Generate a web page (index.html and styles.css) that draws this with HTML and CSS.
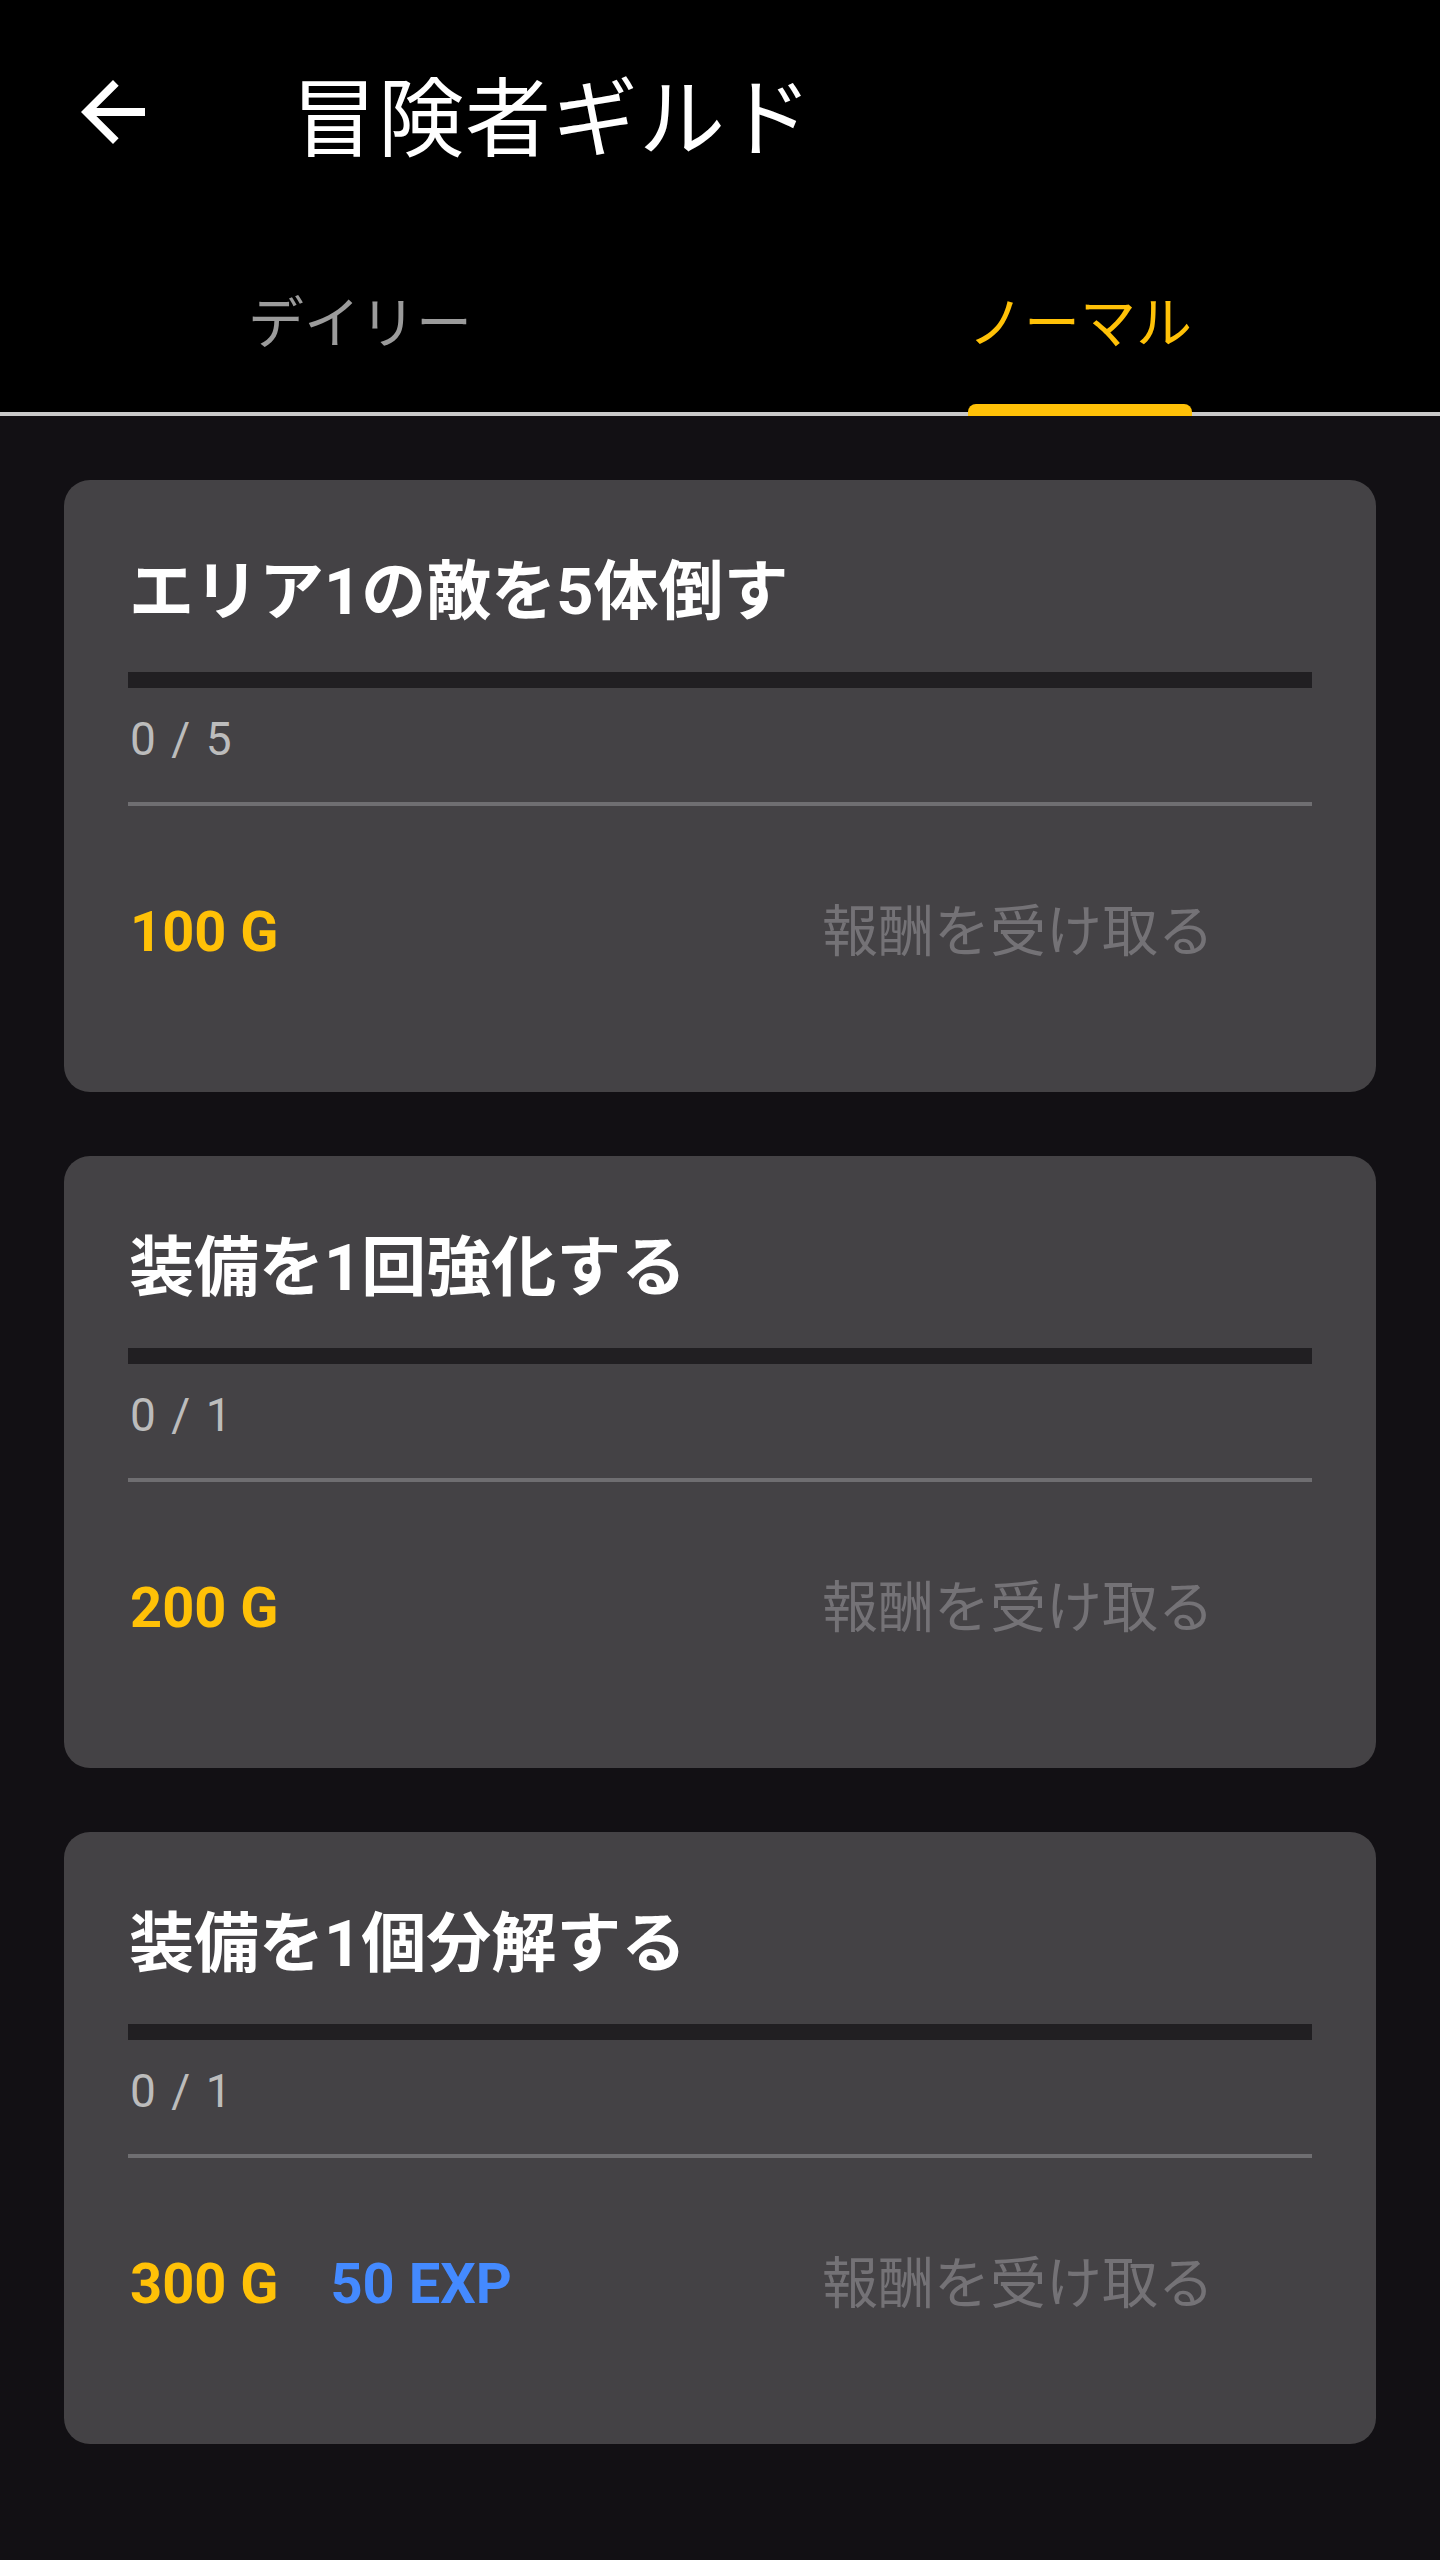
FILE: index.html
```html
<!DOCTYPE html>
<html lang="ja">
<head>
<meta charset="utf-8">
<title>冒険者ギルド</title>
<link rel="stylesheet" href="styles.css">
</head>
<body>
<header class="header">
  <div class="appbar">
    <button class="back" aria-label="戻る">
      <svg viewBox="0 0 24 24" width="96" height="96"><path fill="#ffffff" d="M20 11H7.83l5.59-5.59L12 4l-8 8 8 8 1.41-1.41L7.83 13H20v-2z"/></svg>
    </button>
    <h1 class="title">冒険者ギルド</h1>
  </div>
  <nav class="tabs">
    <div class="tab">デイリー</div>
    <div class="tab active">ノーマル<span class="indicator"></span></div>
  </nav>
</header>
<main class="list">
  <section class="card">
    <h2 class="quest">エリア1の敵を5体倒す</h2>
    <div class="bar"></div>
    <div class="count">0 / 5</div>
    <div class="divider"></div>
    <div class="reward-row">
      <div class="rewards"><span class="gold">100 G</span></div>
      <button class="claim" disabled>報酬を受け取る</button>
    </div>
  </section>
  <section class="card">
    <h2 class="quest">装備を1回強化する</h2>
    <div class="bar"></div>
    <div class="count">0 / 1</div>
    <div class="divider"></div>
    <div class="reward-row">
      <div class="rewards"><span class="gold">200 G</span></div>
      <button class="claim" disabled>報酬を受け取る</button>
    </div>
  </section>
  <section class="card">
    <h2 class="quest">装備を1個分解する</h2>
    <div class="bar"></div>
    <div class="count">0 / 1</div>
    <div class="divider"></div>
    <div class="reward-row">
      <div class="rewards"><span class="gold">300 G</span><span class="exp">50 EXP</span></div>
      <button class="claim" disabled>報酬を受け取る</button>
    </div>
  </section>
</main>
</body>
</html>
```
FILE: styles.css
```css
* { box-sizing: border-box; }
html, body { margin: 0; padding: 0; }
body {
  background: #121014;
  font-family: "Roboto", "Noto Sans CJK JP", sans-serif;
  color: #ffffff;
  min-height: 2560px;
}
.header {
  background: #000000;
}
.appbar {
  height: 224px;
  display: flex;
  align-items: center;
  padding-left: 65px;
}
.back {
  width: 96px;
  height: 96px;
  padding: 0;
  border: 0;
  background: transparent;
  display: flex;
}
.title {
  margin: 0 0 0 130px;
  font-size: 86px;
  font-weight: 400;
  line-height: 100px;
  position: relative;
  top: 9px;
  letter-spacing: 1px;
}
.tabs {
  display: flex;
  height: 192px;
  border-bottom: 4px solid #c9c9c9;
}
.tab {
  flex: 1;
  display: flex;
  align-items: center;
  justify-content: center;
  font-size: 56px;
  color: #9b9b9b;
  position: relative;
  padding-top: 0;
}
.tab.active { color: #ffc107; }
.indicator {
  position: absolute;
  bottom: -4px;
  left: 50%;
  width: 224px;
  margin-left: -112px;
  height: 12px;
  background: #ffc107;
  border-radius: 8px 8px 0 0;
}
.list {
  padding: 64px 64px 0;
  display: flex;
  flex-direction: column;
  gap: 64px;
}
.card {
  background: #444245;
  border-radius: 26px;
  height: 612px;
  padding: 72px 64px 0;
  display: flex;
  flex-direction: column;
}
.quest {
  margin: 0;
  font-size: 65px;
  font-weight: 700;
  line-height: 80px;
  padding-left: 1px;
}
.bar {
  margin-top: 40px;
  height: 16px;
  background: #211f22;
}
.count {
  margin-top: 23px;
  font-size: 46px;
  line-height: 56px;
  color: #bcbcbc;
  padding-left: 2px;
  letter-spacing: 2px;
}
.divider {
  margin-top: 35px;
  height: 4px;
  background: #6f6e71;
}
.reward-row {
  margin-top: 86px;
  height: 80px;
  display: flex;
  align-items: center;
  justify-content: space-between;
}
.rewards {
  display: flex;
  gap: 52px;
  font-size: 56px;
  font-weight: 700;
  padding-left: 2px;
}
.gold { color: #ffc107; }
.exp { color: #448aff; }
.claim {
  font-family: "Roboto", "Noto Sans CJK JP", sans-serif;
  font-size: 56px;
  color: #747276;
  background: transparent;
  border: 0;
  padding: 0;
  margin-right: 98px;
  line-height: 80px;
}
```
